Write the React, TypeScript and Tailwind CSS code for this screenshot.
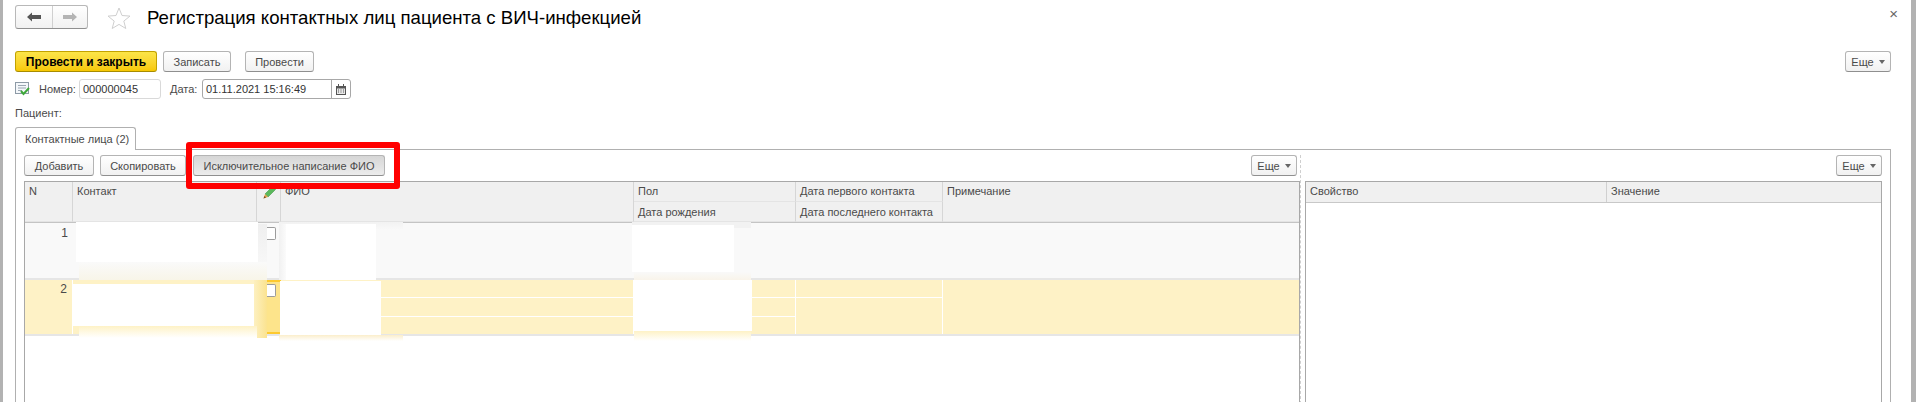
import React from 'react';

const headCell = 'bg-[#f0f0f0] border-r border-b border-r-[#d6d6d6] border-b-[#e4e4e4] pl-[4px] pt-[1px] leading-[16px] whitespace-nowrap';

const Btn: React.FC<{ className?: string; children: React.ReactNode }> = ({ className = '', children }) => (
  <button className={`h-[21px] shrink-0 rounded-[3px] border border-[#b4b4b4] border-b-[#8f8f8f] bg-gradient-to-b from-white to-[#f1f1f1] text-[11px] leading-[18px] text-[#4a4a4a] ${className}`}>
    {children}
  </button>
);

const MoreBtn: React.FC<{ className?: string }> = ({ className = '' }) => (
  <Btn className={`w-[46px] flex items-center justify-center gap-[5px] ${className}`}>
    Еще
    <svg width="6" height="4" viewBox="0 0 6 4"><path d="M0 0h6L3 4z" fill="#666" /></svg>
  </Btn>
);

const Pencil = () => (
  <svg width="15" height="15" viewBox="0 0 15 15" className="ml-[5px] mt-[3px]">
    <path d="M10.500 1.500l3 3L6 12l-3-3z" fill="#5cb85c" stroke="#3f9a48" strokeWidth="0.6" />
    <path d="M3 9l3 3-4.500 1.500z" fill="#e8a34e" />
    <path d="M1.500 13.500l1-2.500 1.500 1.500z" fill="#6b4a22" />
  </svg>
);

const Check: React.FC<{ className: string }> = ({ className }) => (
  <div className={`ml-[10px] w-[9px] h-[13px] border border-l-0 border-[#9c9c9c] rounded-r-[2px] bg-white ${className}`} />
);

const ContactsTable = () => (
  <div className="mt-[5px] h-[300px] border-l border-t border-r border-[#a8a8a8] text-[11px] text-[#4a4a4a]">
    <div className="grid grid-cols-[48px_184px_24px_353px_162px_147px_1fr] grid-rows-[20px_20px]">
      <div className={`${headCell} row-span-2`}>N</div>
      <div className={`${headCell} row-span-2`}>Контакт</div>
      <div className={`${headCell} row-span-2 !pl-0 !pt-0`}><Pencil /></div>
      <div className={`${headCell} row-span-2`}>ФИО</div>
      <div className={headCell}>Пол</div>
      <div className={headCell}>Дата первого контакта</div>
      <div className={`${headCell} row-span-2 !border-r-0`}>Примечание</div>
      <div className={`${headCell} !pt-[2px]`}>Дата рождения</div>
      <div className={`${headCell} !pt-[2px]`}>Дата последнего контакта</div>
    </div>
    <div className="border-t border-[#c4c4c4] grid grid-cols-[48px_184px_24px_1fr] h-[58px] bg-[#f9f9f9] border-b-2 border-b-[#e6e6e6]">
      <div className="text-right pr-[5px] pt-[1px] text-[12px]">1</div>
      <div />
      <div><Check className="mt-[4px]" /></div>
      <div />
    </div>
    <div className="grid grid-cols-[48px_184px_24px_353px_162px_147px_1fr] h-[56px] bg-[#fef2c6] border-b-2 border-b-[#e6e6e6]">
      <div className="text-right pr-[5px] border-r border-white text-[12px]">2</div>
      <div className="border-r border-white" />
      <div className="bg-[#fde48b] border-y-2 border-[#fdc92f]"><Check className="mt-[2px]" /></div>
      <div className="flex flex-col border-r border-white">
        <div className="h-[18px] border-b border-white" />
        <div className="h-[19px] border-b border-white" />
      </div>
      <div className="flex flex-col border-r border-white">
        <div className="h-[18px] border-b border-white" />
        <div className="h-[19px] border-b border-white" />
      </div>
      <div className="border-r border-white">
        <div className="h-[18px] border-b border-white" />
      </div>
      <div />
    </div>
  </div>
);

const PropsTable = () => (
  <div className="mt-[5px] h-[300px] border border-[#a8a8a8] text-[11px] text-[#4a4a4a]">
    <div className="grid grid-cols-[301px_1fr] h-[21px] border-b border-[#c8c8c8]">
      <div className="bg-[#f0f0f0] border-r border-[#d0d0d0] pl-[4px] pt-[1px] leading-[16px]">Свойство</div>
      <div className="bg-[#f0f0f0] pl-[4px] pt-[1px] leading-[16px]">Значение</div>
    </div>
  </div>
);

export default function App() {
  return (
    <div className="relative flex w-[1916px] h-[402px] overflow-hidden bg-white font-['Liberation_Sans',Arial,sans-serif]">
      <div className="w-[3px] shrink-0 bg-[#b2b2b2]" />
      <div className="w-[1908px] shrink-0 pl-[12px] pr-[20px]">
        {/* title row */}
        <div className="flex items-start pt-[5px] h-[29px]">
          <div className="flex w-[73px] h-[24px] rounded-[3px] border border-[#b8b8b8] border-b-[#8f8f8f] bg-gradient-to-b from-white to-[#f1f1f1]">
            <div className="w-[37px] flex items-center justify-center border-r border-[#d0d0d0]">
              <svg width="14" height="10" viewBox="0 0 14 10"><path d="M0 5l5-4.500V3h9v4H5v2.500z" fill="#555" /></svg>
            </div>
            <div className="flex-1 flex items-center justify-center">
              <svg width="14" height="10" viewBox="0 0 14 10"><path d="M14 5L9 .5V3H0v4h9v2.500z" fill="#b4b4b4" /></svg>
            </div>
          </div>
          <svg width="24" height="22" viewBox="0 0 24 22" className="ml-[19px] mt-[2px]">
            <path d="M12 1l3 7.500 8 .6-6.200 5 2 7.400L12 17.400 5.200 21.500l2-7.400L1 9.100l8-.6z" fill="white" stroke="#cfcfcf" strokeWidth="1" />
          </svg>
          <h1 className="ml-[16px] text-[18.6px] leading-[26px] text-black font-normal whitespace-nowrap">
            Регистрация контактных лиц пациента с ВИЧ-инфекцией
          </h1>
          <span className="ml-auto -mr-[7px] mt-[1px] text-[15px] leading-[16px] text-[#666]">×</span>
        </div>

        {/* command bar */}
        <div className="flex items-center mt-[22px]">
          <Btn className="w-[142px] !border-[#c2a200] !border-b-[#a88c00] !from-[#fce547] !to-[#f7c800] !text-black font-bold !text-[12px]">Провести и закрыть</Btn>
          <Btn className="w-[68px] ml-[6px]">Записать</Btn>
          <Btn className="w-[69px] ml-[14px]">Провести</Btn>
          <MoreBtn className="ml-auto" />
        </div>

        {/* number and date */}
        <div className="flex items-center h-[20px] mt-[7px] text-[11px] text-[#4a4a4a]">
          <svg width="15" height="14" viewBox="0 0 15 14">
            <rect x="0.500" y="0.500" width="13" height="11" fill="#f4f7fa" stroke="#8d9aa6" />
            <path d="M3 3.500h8M3 6h8M3 8.500h4" stroke="#9aa6b2" />
            <path d="M6 9l2.500 3L14 6" fill="none" stroke="#3ea83a" strokeWidth="2" />
          </svg>
          <span className="ml-[9px] w-[40px]">Номер:</span>
          <div className="w-[82px] h-[20px] pl-[3px] leading-[18px] rounded-[3px] border border-[#d9d9d9] text-[#333]">000000045</div>
          <span className="ml-[9px] w-[32px]">Дата:</span>
          <div className="flex w-[149px] h-[20px] rounded-[3px] border border-[#a8a8a8] text-[#333]">
            <div className="w-[129px] pl-[3px] leading-[18px] border-r border-[#a8a8a8]">01.11.2021 15:16:49</div>
            <div className="flex-1 flex items-center justify-center">
              <svg width="10" height="11" viewBox="0 0 10 11">
                <path d="M0 2h10v9H0z" fill="#555" />
                <path d="M2 0h1v3H2zM7 0h1v3H7z" fill="#555" />
                <path d="M1 4.500h8V10H1z" fill="#e8e8e8" />
                <path d="M2 5.500h1v1H2zM4.500 5.500h1v1h-1zM7 5.500h1v1H7zM2 7.500h1v1H2zM4.500 7.500h1v1h-1zM7 7.500h1v1H7z" fill="#555" />
              </svg>
            </div>
          </div>
        </div>

        <div className="h-[16px] mt-[6px] text-[11px] leading-[16px] text-[#4a4a4a]">Пациент:</div>

        {/* tab */}
        <div className="relative z-10 mt-[6px] w-[121px] h-[23px] -mb-px pl-[9px] pt-[3px] leading-[16px] text-[11px] text-[#4a4a4a] whitespace-nowrap bg-white rounded-t-[3px] border border-b-0 border-[#b0b0b0]">
          Контактные лица (2)
        </div>

        <div className="flex h-[260px] border-t border-l border-r border-[#b0b0b0] pl-[8px] pr-[8px]">
          <div className="w-[1276px] shrink-0 pt-[5px]">
            <div className="flex items-center">
              <Btn className="w-[70px]">Добавить</Btn>
              <Btn className="w-[86px] ml-[6px]">Скопировать</Btn>
              <Btn className="w-[192px] ml-[7px] !from-[#d6d6d6] !to-[#ececec]">Исключительное написание ФИО</Btn>
              <MoreBtn className="ml-auto mr-[3px]" />
            </div>
            <ContactsTable />
          </div>
          <div className="w-[5px] shrink-0 mt-[5px] border-l border-dashed border-[#cfcfcf]" />
          <div className="flex-1 pt-[5px]">
            <div className="flex justify-end"><MoreBtn /></div>
            <PropsTable />
          </div>
        </div>
      </div>
      <div className="flex-1 bg-[#b2b2b2]" />

      {/* red callout */}
      <div className="absolute left-[186px] top-[142px] w-[214px] h-[47px] rounded-[3px] border-[6px] border-[#ff0000]" />

      {/* retouched personal data, row 1 */}
      <div className="absolute left-[258px] top-[224px] w-[9px] h-[48px] bg-gradient-to-b from-[#efefef] to-[#f9f9f9]" />
      <div className="absolute left-[279px] top-[222px] w-[124px] h-[8px] bg-gradient-to-b from-[#f2f2f2] to-[#f9f9f9]" />
      <div className="absolute left-[279px] top-[224px] w-[7px] h-[56px] bg-gradient-to-r from-[#f1f1f1] to-[#fbfbfb]" />
      <div className="absolute left-[286px] top-[224px] w-[90px] h-[56px] bg-white" />
      <div className="absolute left-[79px] top-[262px] w-[188px] h-[18px] bg-gradient-to-b from-[#fafafa] to-[#f8f5e8]" />
      <div className="absolute left-[76px] top-[222px] w-[182px] h-[40px] bg-white" />
      <div className="absolute left-[632px] top-[222px] w-[119px] h-[6px] bg-[#f2f2f2]" />
      <div className="absolute left-[632px] top-[225px] w-[102px] h-[47px] bg-white" />
      <div className="absolute left-[634px] top-[272px] w-[117px] h-[8px] bg-gradient-to-b from-[#f9f9f9] to-[#f9f4ea]" />

      {/* retouched personal data, row 2 */}
      <div className="absolute left-[254px] top-[280px] w-[13px] h-[58px] bg-gradient-to-r from-[#fdf0c0] to-[#fbe38f]" />
      <div className="absolute left-[79px] top-[326px] w-[178px] h-[12px] bg-gradient-to-b from-[#fef2c6] to-white" />
      <div className="absolute left-[72px] top-[284px] w-[182px] h-[42px] bg-white" />
      <div className="absolute left-[279px] top-[335px] w-[124px] h-[6px] bg-gradient-to-b from-[#fbeecb] to-white" />
      <div className="absolute left-[280px] top-[281px] w-[101px] h-[54px] bg-white" />
      <div className="absolute left-[634px] top-[331px] w-[117px] h-[10px] bg-gradient-to-b from-[#fef2c6] to-white" />
      <div className="absolute left-[634px] top-[280px] w-[118px] h-[51px] bg-white" />
    </div>
  );
}
